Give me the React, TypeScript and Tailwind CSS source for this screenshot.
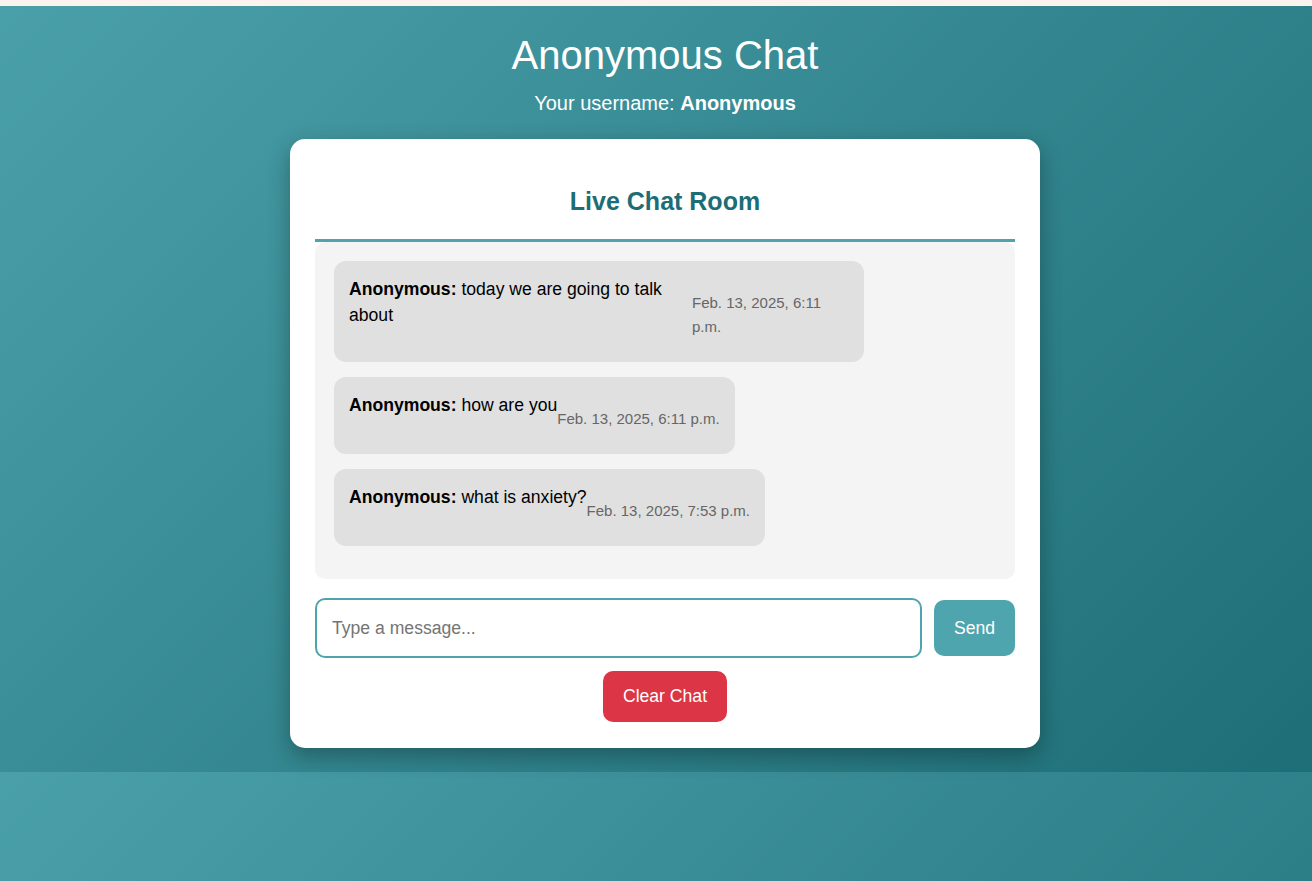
import React from 'react';

interface ChatMessage {
  user: string;
  text: string;
  time: string;
  textClass?: string;
}

const messages: ChatMessage[] = [
  { user: 'Anonymous', text: 'today we are going to talk about', time: 'Feb. 13, 2025, 6:11 p.m.', textClass: 'w-[343px] shrink-0' },
  { user: 'Anonymous', text: 'how are you', time: 'Feb. 13, 2025, 6:11 p.m.' },
  { user: 'Anonymous', text: 'what is anxiety?', time: 'Feb. 13, 2025, 7:53 p.m.' },
];

const MessageBubble: React.FC<{ msg: ChatMessage }> = ({ msg }) => (
  <div className="flex items-start w-fit max-w-[80%] bg-[#e0e0e0] rounded-[12px] px-[15px] py-[15px] mb-[15px]">
    <p className={`text-[17.6px] leading-[26.4px] text-black ${msg.textClass ?? ''}`}>
      <strong>{msg.user}:</strong> {msg.text}
    </p>
    <span className="text-[15px] leading-[24px] text-[#666] mt-[15px] mb-[8px]">{msg.time}</span>
  </div>
);

export default function App() {
  return (
    <div className="min-h-[881px] font-['Liberation_Sans',Arial,sans-serif]">
      <div className="h-[6px] bg-[#fdf3ee]" />
      <div className="min-h-[875px] bg-[linear-gradient(135deg,#4aa0a9,#1e6e77)] bg-[length:100%_766px] bg-repeat">
        <div className="flex flex-col items-center pl-[18px]">
          <h1 className="mt-[26px] mb-[10px] text-[40px] leading-[46px] text-white">Anonymous Chat</h1>
          <p className="text-[20px] leading-[30px] text-white">
            Your username: <strong>Anonymous</strong>
          </p>

          <div className="mt-[21px] w-[750px] bg-white rounded-[15px] px-[25px] pt-[25px] pb-[26px] shadow-[0_8px_22px_rgba(0,0,0,0.3)]">
            <h2 className="mt-[23px] pb-[23px] border-b-[3px] border-[#4ea4ad] text-center text-[25px] leading-[29px] font-bold text-[#1d6d76]">
              Live Chat Room
            </h2>

            <div className="bg-[#f4f4f4] rounded-[10px] pt-[19px] px-[19px] pb-[18px]">
              {messages.map((m, i) => (
                <MessageBubble key={i} msg={m} />
              ))}
            </div>

            <div className="mt-[19px] flex items-center gap-[12px]">
              <input
                type="text"
                placeholder="Type a message..."
                className="flex-1 min-w-0 border-2 border-[#4ea4ad] rounded-[10px] px-[15px] py-[15px] text-[17.6px] leading-[26.4px] outline-none placeholder:text-[#757575]"
              />
              <button className="bg-[#4ea5ae] text-white rounded-[10px] px-[20px] py-[15px] text-[17.6px] leading-[26.4px]">
                Send
              </button>
            </div>

            <div className="mt-[13px] flex justify-center">
              <button className="bg-[#dc3545] text-white rounded-[10px] px-[20px] py-[12px] text-[17.6px] leading-[26.4px]">
                Clear Chat
              </button>
            </div>
          </div>
        </div>
      </div>
    </div>
  );
}
